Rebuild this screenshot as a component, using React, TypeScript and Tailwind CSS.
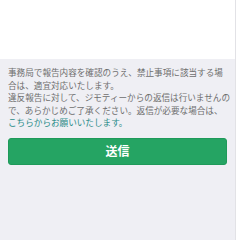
import React from "react";

const App = () => {
  return (
    <div className="w-[240px] h-[240px] flex bg-white overflow-hidden">
      <div className="w-[236px] h-full flex flex-col border-r border-[#e2e2e6] font-['Noto_Sans_CJK_JP','Noto_Sans',sans-serif]">
        {/* top white area */}
        <div className="h-[59px] bg-white" />
        {/* notice + submit */}
        <div className="flex-1 bg-[#efeff4] px-2 pt-[7px]">
          <p className="text-[8.6px] leading-[12.5px] text-[#6e6e6e] whitespace-nowrap">
            事務局で報告内容を確認のうえ、禁止事項に該当する場
            <br />
            合は、適宜対応いたします。
            <br />
            違反報告に対して、ジモティーからの返信は行いませんの
            <br />
            で、あらかじめご了承ください。返信が必要な場合は、
            <br />
            <span className="text-[#2a8c88]">こちらからお願いいたします。</span>
          </p>
          <button
            type="button"
            className="mt-[9px] w-full h-[27px] rounded-[3px] bg-[#25a463] border border-[#1f9a5a] text-white text-[12px] font-bold leading-none"
          >
            送信
          </button>
        </div>
      </div>
      <div className="flex-1 bg-white" />
    </div>
  );
};

export default App;
